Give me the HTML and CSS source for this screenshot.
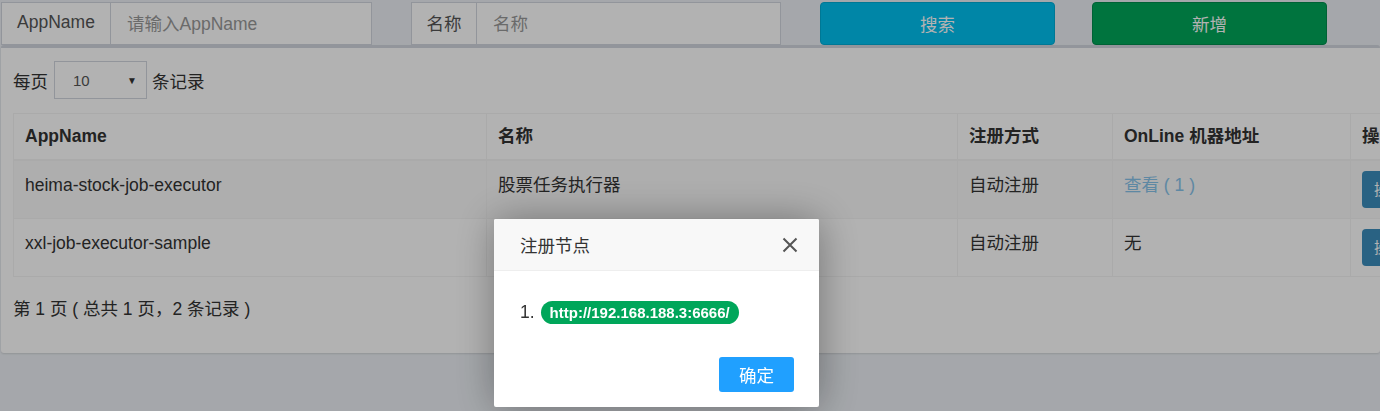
FILE: index.html
```html
<!DOCTYPE html>
<html lang="zh-CN">
<head>
<meta charset="utf-8">
<title>执行器管理</title>
<link rel="stylesheet" href="styles.css">
</head>
<body>
<div class="page">
  <div class="toolbar">
    <div class="igroup g1"><span class="addon a1">AppName</span><span class="field">请输入AppName</span></div>
    <div class="igroup g2"><span class="addon a2">名称</span><span class="field">名称</span></div>
    <div class="btn btn-info">搜索</div>
    <div class="btn btn-success">新增</div>
  </div>
  <div class="box">
    <div class="len">每页 <div class="select"><span>10</span><span class="caret">▼</span></div> 条记录</div>
    <table class="grid">
      <colgroup>
        <col class="c1"><col class="c2"><col class="c3"><col class="c4"><col class="c5">
      </colgroup>
      <thead>
        <tr><th>AppName</th><th>名称</th><th>注册方式</th><th>OnLine 机器地址</th><th>操作</th></tr>
      </thead>
      <tbody>
        <tr class="odd"><td>heima-stock-job-executor</td><td>股票任务执行器</td><td>自动注册</td><td><span class="link">查看 ( 1 )</span></td><td><span class="op">操作 ▼</span></td></tr>
        <tr><td>xxl-job-executor-sample</td><td></td><td>自动注册</td><td>无</td><td><span class="op">操作 ▼</span></td></tr>
      </tbody>
    </table>
    <div class="info">第 1 页 ( 总共 1 页，2 条记录 )</div>
  </div>
</div>
<div class="mask"></div>
<div class="modal">
  <div class="mhead">
    <span class="mtitle">注册节点</span>
    <svg class="close" width="16" height="16" viewBox="0 0 16 16"><path d="M1.5 1.5 L14.5 14.5 M14.5 1.5 L1.5 14.5" stroke="#555" stroke-width="2" fill="none"/></svg>
  </div>
  <div class="mbody"><span class="num">1.</span><span class="badge">http://192.168.188.3:6666/</span></div>
  <div class="mfoot"><span class="ok">确定</span></div>
</div>
</body>
</html>
```
FILE: styles.css
```css
html, body {
  margin: 0;
  padding: 0;
  width: 1380px;
  height: 411px;
  overflow: hidden;
  background: #ecf0f5;
  font-family: "Liberation Sans", "Noto Sans CJK SC", sans-serif;
  font-size: 17.5px;
  color: #333;
}
.page {
  width: 1380px;
  height: 411px;
}
.toolbar {
  display: flex;
  padding: 2px 0 0 1px;
  height: 43px;
}
.igroup {
  display: flex;
  height: 43px;
  box-sizing: border-box;
  border: 1px solid #d2d6de;
  background: #fff;
}
.g1 { width: 371px; margin-right: 39px; }
.g2 { width: 370px; margin-right: 39px; }
.addon {
  display: flex;
  align-items: center;
  justify-content: center;
  border-right: 1px solid #d2d6de;
  color: #555;
  background: #fff;
  padding-bottom: 2px;
  box-sizing: border-box;
}
.a1 { width: 109px; }
.a2 { width: 65px; }
.field {
  display: flex;
  align-items: center;
  padding-left: 16px;
  padding-bottom: 3px;
  color: #999;
}
.btn {
  width: 235px;
  height: 43px;
  box-sizing: border-box;
  border-radius: 4px;
  display: flex;
  align-items: center;
  justify-content: center;
  color: #fff;
}
.btn-info { background: #00c0ef; border: 1px solid #00acd6; margin-right: 37px; }
.btn-success { background: #00a65a; border: 1px solid #008d4c; }
.box {
  margin-left: 1px;
  width: 1379px;
  box-sizing: border-box;
  background: #fff;
  border-top: 3px solid #d2d6de;
  border-radius: 3px;
  box-shadow: 0 1px 2px rgba(0,0,0,0.12);
  padding: 13px 0 31px 12px;
  overflow: hidden;
}
.len {
  display: flex;
  align-items: center;
  height: 38px;
}
.select {
  width: 93px;
  height: 38px;
  box-sizing: border-box;
  border: 1px solid #d2d6de;
  margin: 0 5px 0 6px;
  display: flex;
  align-items: center;
  justify-content: space-between;
  padding: 0 9px 0 18px;
  font-size: 15px;
  color: #555;
}
.caret { font-size: 10px; color: #333; }
.grid {
  margin-top: 14px;
  border-collapse: collapse;
  table-layout: fixed;
  width: 1480px;
}
.c1 { width: 473px; }
.c2 { width: 471px; }
.c3 { width: 155px; }
.c4 { width: 238px; }
.c5 { width: 143px; }
.grid th, .grid td {
  border: 1px solid #f4f4f4;
  padding: 10px 11px;
  line-height: 25px;
  text-align: left;
  vertical-align: top;
}
.grid th {
  font-weight: bold;
  border-bottom: 2px solid #f4f4f4;
  color: #333;
}
.grid td {
  height: 37px;
  box-sizing: content-box;
  padding-top: 12px;
  padding-bottom: 8px;
}
.grid tr.odd td { background: #f9f9f9; }
.link { color: #87c3ea; }
.op {
  display: inline-block;
  margin-top: -2px;
  height: 37px;
  line-height: 37px;
  padding: 0 12px;
  box-sizing: border-box;
  border-radius: 4px;
  background: #3c8dbc;
  color: #fff;
  font-size: 15px;
  vertical-align: top;
}
.info {
  margin-top: 20px;
  line-height: 25px;
}
.mask {
  position: fixed;
  inset: 0;
  background: rgba(0,0,0,0.3);
}
.modal {
  position: fixed;
  left: 494px;
  top: 219px;
  width: 325px;
  height: 188px;
  background: #fff;
  border-radius: 2px;
  box-shadow: 1px 1px 40px rgba(0,0,0,0.35);
  display: flex;
  flex-direction: column;
}
.mhead {
  height: 51px;
  background: #f8f8f8;
  border-bottom: 1px solid #eee;
  border-radius: 2px 2px 0 0;
  display: flex;
  align-items: center;
  justify-content: space-between;
  padding: 0 21px 0 26px;
}
.mtitle { color: #333; }
.close { display: block; }
.mbody {
  padding: 30px 26px 0;
  display: flex;
  align-items: center;
  height: 23px;
}
.num { margin-right: 6px; color: #333; }
.badge {
  height: 23px;
  line-height: 23px;
  padding: 0 9px;
  border-radius: 12px;
  background: #00a65a;
  color: #fff;
  font-weight: bold;
  font-size: 15px;
}
.mfoot {
  display: flex;
  justify-content: flex-end;
  padding: 33px 25px 0;
}
.ok {
  width: 75px;
  height: 35px;
  border-radius: 3px;
  background: #20a0ff;
  color: #fff;
  display: flex;
  align-items: center;
  justify-content: center;
}
```
